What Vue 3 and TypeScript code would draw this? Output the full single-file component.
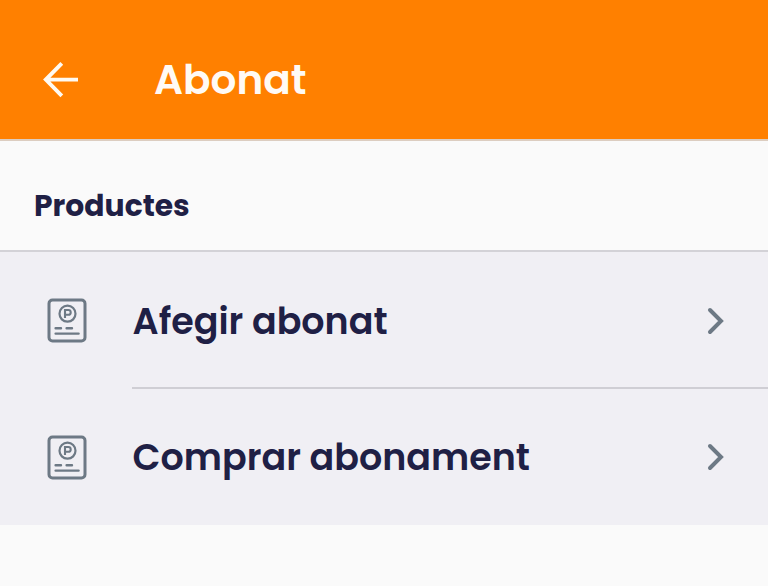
<script setup lang="ts">
interface Product {
  id: string
  label: string
}

const products: Product[] = [
  { id: 'add', label: 'Afegir abonat' },
  { id: 'buy', label: 'Comprar abonament' },
]
</script>

<template>
  <main class="screen">
    <header class="bar">
      <button class="back" type="button">
        <svg width="38" height="38" viewBox="0 0 38 38">
          <path d="M20.8 2.3 4.8 18.6l16 16.3M4.8 18.6H37" />
        </svg>
      </button>
      <h1 class="title">Abonat</h1>
    </header>
    <h2 class="section"><span>Productes</span></h2>
    <ul class="list">
      <li v-for="product in products" :key="product.id" class="row">
        <svg class="ticket" width="40" height="46" viewBox="0 0 40 46">
          <rect x="2" y="2" width="36" height="41" rx="3.5" />
          <circle cx="20.5" cy="15.7" r="8" />
          <path class="letter" d="M18 20v-8h3.3a2.4 2.4 0 0 1 0 4.8h-3.3" />
          <path class="lines" d="M8.6 30.3h5.4M19.6 30.3h5.4M8.6 35.6h23" />
        </svg>
        <div class="content">
          <span class="label">{{ product.label }}</span>
          <svg class="chevron" width="20" height="30" viewBox="0 0 20 30">
            <path d="M4 4 15 15 4 26" />
          </svg>
        </div>
      </li>
    </ul>
  </main>
</template>

<style>
body {
  background: #fafafa;
}
</style>

<style scoped>
.screen {
  min-height: 586px;
  background: #fafafa;
  color: #1f2045;
  font-family: Poppins, Inter, sans-serif;
  overflow: hidden;
}
.bar {
  display: flex;
  align-items: center;
  box-sizing: border-box;
  height: 141px;
  padding: 20px 42px 0 41px;
  border-bottom: 2px solid #dccdc0;
  background: #ff8000;
}
.back {
  display: flex;
  padding: 0;
  border: 0;
  background: none;
}
.back path {
  fill: none;
  stroke: #fffaf2;
  stroke-width: 3.9;
}
.title {
  margin: 0 0 0 75px;
  color: #fffaf5;
  font-size: 40.6px;
  font-weight: 600;
  line-height: 48px;
}
.section {
  display: flex;
  align-items: center;
  box-sizing: border-box;
  height: 111px;
  margin: 0;
  padding: 21px 34px 0 34px;
  border-bottom: 2px solid #d3d2d7;
  font-size: 29.8px;
  font-weight: 700;
  line-height: 36px;
}
.list {
  margin: 0;
  padding: 0;
  background: #f0eff4;
  list-style: none;
}
.row {
  display: flex;
  height: 137px;
  padding-left: 47px;
}
.row:last-child {
  height: 136px;
}
.ticket {
  flex: none;
  margin: 46px 45px 0 0;
  fill: none;
  stroke: #6d7985;
  stroke-width: 3;
}
.ticket circle {
  stroke-width: 2.2;
}
.ticket .letter {
  stroke-width: 2.1;
}
.ticket .lines {
  stroke-width: 2.4;
  stroke-linecap: round;
}
.content {
  display: flex;
  flex: 1;
  align-items: center;
  justify-content: space-between;
  box-sizing: border-box;
  padding: 2px 42px 0 0;
  border-bottom: 2px solid #cfced4;
}
.row:last-child .content {
  border-bottom-color: transparent;
}
.label {
  padding: 2px 0 0 0.6px;
  font-size: 36.45px;
  font-weight: 600;
  line-height: 48px;
  white-space: nowrap;
}
.chevron {
  flex: none;
  fill: none;
  stroke: #6d7985;
  stroke-width: 4;
  stroke-linecap: round;
}
</style>
